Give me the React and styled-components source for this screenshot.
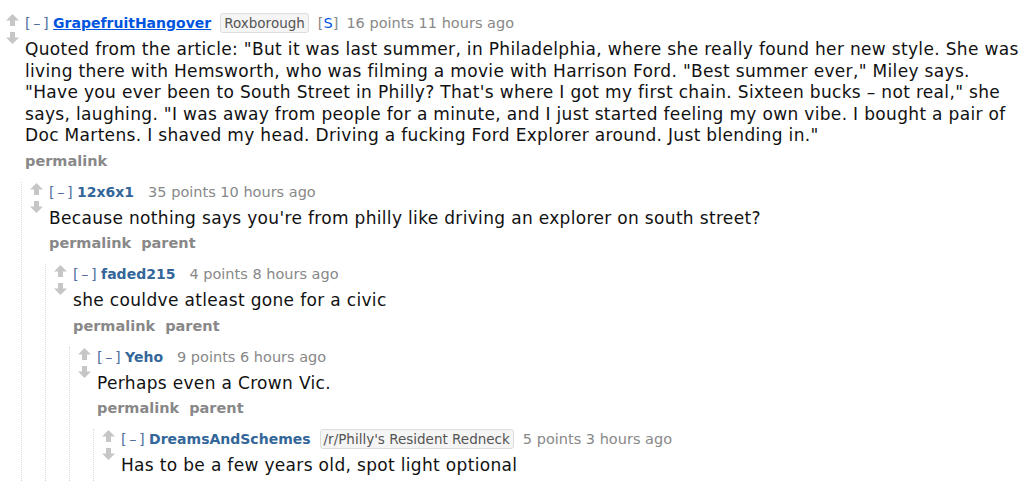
import React from 'react'
import styled, {createGlobalStyle} from 'styled-components'

const GlobalStyle = createGlobalStyle`
    body {
        margin: 0;
        background: #fff;
        font-family: "DejaVu Sans", Verdana, sans-serif;
        color: #111;
    }
`

const thread = {
    author: 'GrapefruitHangover',
    submitter: true,
    flair: 'Roxborough',
    points: 16,
    time: '11 hours ago',
    body: 'Quoted from the article: "But it was last summer, in Philadelphia, where she really found her new style. She was\nliving there with Hemsworth, who was filming a movie with Harrison Ford. "Best summer ever," Miley says.\n"Have you ever been to South Street in Philly? That\'s where I got my first chain. Sixteen bucks \u2013 not real," she\nsays, laughing. "I was away from people for a minute, and I just started feeling my own vibe. I bought a pair of\nDoc Martens. I shaved my head. Driving a fucking Ford Explorer around. Just blending in."',
    buttons: ['permalink'],
    replies: [{
        author: '12x6x1',
        points: 35,
        time: '10 hours ago',
        body: "Because nothing says you're from philly like driving an explorer on south street?",
        buttons: ['permalink', 'parent'],
        replies: [{
            author: 'faded215',
            points: 4,
            time: '8 hours ago',
            body: 'she couldve atleast gone for a civic',
            buttons: ['permalink', 'parent'],
            replies: [{
                author: 'Yeho',
                points: 9,
                time: '6 hours ago',
                body: 'Perhaps even a Crown Vic.',
                buttons: ['permalink', 'parent'],
                replies: [{
                    author: 'DreamsAndSchemes',
                    flair: "/r/Philly's Resident Redneck",
                    points: 5,
                    time: '3 hours ago',
                    body: 'Has to be a few years old, spot light optional',
                    buttons: [],
                    replies: []
                }]
            }]
        }]
    }]
}

// grey vote arrow, flipped for the downvote
function Arrow({down}) {
    return (
        <svg width="13" height="12" viewBox="0 0 13 12" style={down ? {transform: 'rotate(180deg)'} : null}>
            <path d="M6.5 0 L13 6.5 L9 6.5 L9 12 L4 12 L4 6.5 L0 6.5 Z" fill="#c6c6c6"/>
        </svg>
    )
}

function Comment({data}) {
    const plain = !data.flair && !data.submitter
    return (
        <Thing>
            <Row>
                <MidCol>
                    <Arrow/>
                    <Arrow down/>
                </MidCol>
                <Entry>
                    <Tagline>
                        <Expand>[&ndash;]</Expand>
                        <Author $submitter={data.submitter}>{data.author}</Author>
                        {data.flair && <Flair>{data.flair}</Flair>}
                        {data.submitter && <Tag>[<b>S</b>]</Tag>}
                        <Score $spaced={plain}>{data.points} points {data.time}</Score>
                    </Tagline>
                    <Body>{data.body}</Body>
                    {data.buttons.length > 0 &&
                        <Buttons>
                            {data.buttons.map(b => <li key={b}>{b}</li>)}
                        </Buttons>
                    }
                </Entry>
            </Row>
            {data.replies.length > 0 &&
                <Child>
                    {data.replies.map(r => <Comment key={r.author} data={r}/>)}
                </Child>
            }
        </Thing>
    )
}

function App() {
    return (
        <>
            <GlobalStyle/>
            <Page>
                <Comment data={thread}/>
            </Page>
        </>
    )
}

export default App

const Page = styled.div`
    padding: 13px 0 0 6px;
    height: 485px;
    box-sizing: border-box;
    overflow: hidden;
`

const Thing = styled.div`
    display: flex;
    flex-direction: column;
`

const Row = styled.div`
    display: flex;
    gap: 6px;
`

const MidCol = styled.div`
    width: 13px;
    flex-shrink: 0;
    display: flex;
    flex-direction: column;
    gap: 6px;
    padding-top: 1px;
`

const Entry = styled.div`
    flex: 1;
    min-width: 0;
`

const Tagline = styled.div`
    display: flex;
    align-items: center;
    height: 20px;
    font-size: 14.5px;
    color: #888;
    white-space: nowrap;
`

const Expand = styled.span`
    color: #4f6f9f;
    letter-spacing: 2.5px;
    margin-right: 2px;
`

const Author = styled.span`
    font-size: 14px;
    font-weight: bold;
    color: ${p => p.$submitter ? '#0055df' : '#369'};
    text-decoration: ${p => p.$submitter ? 'underline' : 'none'};
    margin-right: 9px;
`

const Flair = styled.span`
    background: #f5f5f5;
    border: 1px solid #ddd;
    border-radius: 3px;
    color: #545454;
    font-size: 13.5px;
    padding: 0 3px;
    line-height: 18px;
    margin-right: 9px;
`

const Tag = styled.span`
    color: #888;
    margin-right: 8px;
    b {
        font-weight: normal;
        color: #0055df;
    }
`

const Score = styled.span`
    color: #888;
    margin-left: ${p => p.$spaced ? '5px' : '0'};
`

const Body = styled.div`
    font-size: 17px;
    letter-spacing: 0.33px;
    line-height: 21.5px;
    padding: 6px 0 4px;
    color: #111;
    white-space: pre-line;
`

const Buttons = styled.ul`
    list-style: none;
    margin: 0;
    padding: 0;
    display: flex;
    gap: 10px;
    height: 20px;
    align-items: center;
    font-size: 14.5px;
    font-weight: bold;
    color: #888;
`

const Child = styled.div`
    margin: 11px 0 0 15px;
    padding-left: 8px;
    border-left: 1px dotted #d6d6e6;
`
